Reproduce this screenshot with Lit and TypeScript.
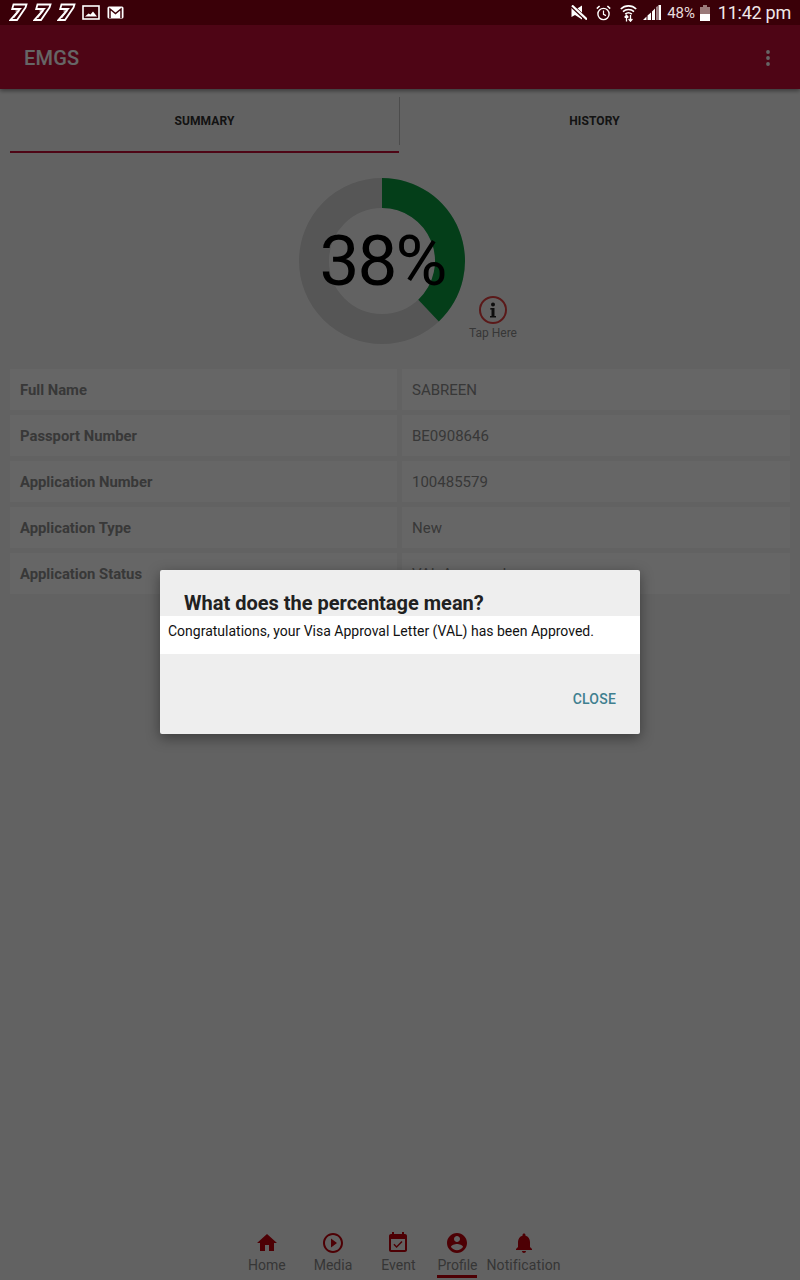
import { LitElement, html, css, svg } from "lit";
import { customElement } from "lit/decorators.js";

const seven = svg`<path d="M4.500 1.500h13l-1 3L8 17H1.500L11 6H3.200z" fill="none" stroke="#fff" stroke-width="1.800"/><path d="M6.500 8h3.500L4.500 15" fill="none" stroke="#fff" stroke-width="1.100"/>`;

const rows: [string, string][] = [
  ["Full Name", "SABREEN"],
  ["Passport Number", "BE0908646"],
  ["Application Number", "100485579"],
  ["Application Type", "New"],
  ["Application Status", "VAL Approved"],
];

const navItems = [
  { label: "Home", cls: "home", d: "M10 20v-6h4v6h5v-8h3L12 3 2 12h3v8z" },
  { label: "Media", cls: "media", d: "M10 16.5l6-4.5-6-4.5v9zM12 2C6.48 2 2 6.48 2 12s4.48 10 10 10 10-4.48 10-10S17.52 2 12 2zm0 18c-4.41 0-8-3.59-8-8s3.59-8 8-8 8 3.59 8 8-3.59 8-8 8z" },
  { label: "Event", cls: "event", d: "M16.53 11.06L15.47 10l-4.88 4.88-2.12-2.12-1.06 1.06L10.59 17l5.94-5.94zM19 3h-1V1h-2v2H8V1H6v2H5c-1.11 0-1.99.9-1.99 2L3 19c0 1.1.89 2 2 2h14c1.1 0 2-.9 2-2V5c0-1.1-.9-2-2-2zm0 16H5V8h14v11z" },
  { label: "Profile", cls: "profile", d: "M12 2C6.48 2 2 6.48 2 12s4.48 10 10 10 10-4.48 10-10S17.52 2 12 2zm0 3c1.66 0 3 1.34 3 3s-1.34 3-3 3-3-1.34-3-3 1.34-3 3-3zm0 14.2c-2.5 0-4.71-1.28-6-3.22.03-1.99 4-3.08 6-3.08 1.99 0 5.97 1.09 6 3.08-1.29 1.94-3.5 3.22-6 3.22z" },
  { label: "Notification", cls: "notif", d: "M12 22c1.1 0 2-.9 2-2h-4c0 1.1.89 2 2 2zm6-6v-5c0-3.07-1.64-5.64-4.5-6.32V4c0-.83-.67-1.5-1.5-1.5s-1.5.67-1.5 1.5v.68C7.63 5.36 6 7.92 6 11v5l-2 2v1h16v-1l-2-2z" },
];

@customElement("app-root")
export class AppRoot extends LitElement {
  static styles = css`
    :host { display: block; position: relative; width: 800px; height: 1280px; overflow: hidden; background: #f6f6f6; font-family: Roboto, "Liberation Sans", sans-serif; }
    .status { height: 25px; background: #3a0008; display: flex; align-items: center; position: relative; z-index: 3; color: #f0e8e8; }
    .left { display: flex; align-items: center; padding-left: 9px; }
    .left svg { display: block; }
    .seven { margin-right: 5px; }
    .seven:nth-child(3) { margin-right: 6px; }
    .pic { margin-right: 7px; }
    .spacer { flex: 1; }
    .right { display: flex; align-items: center; padding-right: 9px; }
    .pct { font-size: 15px; margin-left: 6px; letter-spacing: -.1px; color: #e8dcdc; }
    .time { font-size: 18px; margin-left: 8px; letter-spacing: -.25px; }
    .batt { margin-left: 5px; }
    .m-a { margin-left: 9px; }
    .m-w { margin-left: 9px; }
    .m-s { margin-left: 6px; }
    .appbar { height: 64px; background: #c20d36; display: flex; align-items: center; justify-content: space-between; padding: 2px 30px 0 24px; box-sizing: border-box; color: #fff; font-size: 20px; font-weight: 500; letter-spacing: .2px; box-shadow: 0 2px 4px rgba(0,0,0,.4); position: relative; }
    .tabs { display: flex; margin: 8px 10px 0; height: 56px; }
    .tab { flex: 1; display: flex; align-items: center; justify-content: center; padding-bottom: 9px; font-size: 12px; font-weight: 700; letter-spacing: .1px; color: #303030; }
    .tab.on { border-bottom: 2px solid #c20d36; flex: 0 0 389px; box-sizing: border-box; position: relative; padding-bottom: 7px; }
    .tab.on::after { content: ""; position: absolute; right: -1px; top: 0; height: 48px; width: 1px; background: #bdbdbd; }
    .chart { position: relative; height: 216px; }
    .donut { position: absolute; left: 299px; top: 25px; display: block; }
    .num { position: absolute; left: 299px; top: 24px; width: 167px; height: 167px; display: flex; align-items: center; justify-content: center; font-size: 71px; color: #000; line-height: 1; letter-spacing: -2px; }
    .tap { position: absolute; left: 469px; top: 142px; width: 48px; display: flex; flex-direction: column; align-items: center; color: #8a8a8a; font-size: 12px; }
    .tap svg { display: block; margin-bottom: 1px; }
    .rows { display: flex; flex-direction: column; gap: 5px; padding: 0 10px; }
    .row { display: grid; grid-template-columns: 387px 388px; column-gap: 5px; height: 41px; }
    .cell { background: #ffffff; display: flex; align-items: center; padding: 1px 0 0 10px; font-size: 15px; color: #8c8c8c; }
    .cell.k { font-weight: 700; font-size: 14.8px; color: #8c8c8c; }
    .nav { position: absolute; left: 0; right: 0; top: 1231px; height: 49px; display: flex; padding-left: 248px; }
    .item { display: flex; flex-direction: column; align-items: center; color: #888; font-size: 14px; height: 47px; box-sizing: border-box; }
    .item svg { display: block; flex: none; }
    .item span { line-height: 20px; }
    .media { margin-left: 28px; }
    .event { margin-left: 29px; }
    .profile { margin-left: 22px; border-bottom: 3px solid #c0000a; }
    .notif { margin-left: 9px; letter-spacing: .1px; }
    .scrim { position: absolute; left: 0; right: 0; top: 25px; bottom: 0; background: rgba(0,0,0,.6); }
    .dialog { position: absolute; left: 160px; top: 570px; width: 480px; height: 164px; background: #eeeeee; border-radius: 2px; box-shadow: 0 4px 14px rgba(0,0,0,.4); display: flex; flex-direction: column; overflow: hidden; }
    .title { height: 46px; box-sizing: border-box; padding: 20px 24px 0; font-size: 20px; font-weight: 700; line-height: 27px; color: #212121; white-space: nowrap; }
    .body { height: 38px; box-sizing: border-box; background: #fff; padding: 5px 8px 0; font-size: 14px; line-height: 20px; color: #111; }
    .actions { flex: 1; display: flex; justify-content: flex-end; align-items: center; padding: 10px 24px 0 0; font-size: 14px; font-weight: 500; color: #3f7f8f; letter-spacing: .2px; }
  `;

  render() {
    const sweep = (38 / 100) * 2 * Math.PI;
    const R = 83, r = 53, c = 83;
    const pt = (rad: number, a: number) => `${(c + rad * Math.sin(a)).toFixed(2)} ${(c - rad * Math.cos(a)).toFixed(2)}`;
    const arc = `M${pt(R, 0)} A${R} ${R} 0 0 1 ${pt(R, sweep)} L${pt(r, sweep)} A${r} ${r} 0 0 0 ${pt(r, 0)} Z`;
    return html`
      <div class="status">
        <div class="left">
          ${[0, 1, 2].map(() => html`<svg class="seven" width="19" height="19" viewBox="0 0 19 19">${seven}</svg>`)}
          <svg class="pic" width="18" height="15" viewBox="0 0 18 15"><rect x="1" y="1" width="16" height="13" fill="none" stroke="#fff" stroke-width="1.600"/><path d="M3 11.500l3.500-3 2 1 2.500-3 4 5z" fill="#fff"/></svg>
          <svg width="17" height="13" viewBox="0 0 17 13"><rect x="0.500" y="0.500" width="16" height="12" rx="1.500" fill="#fff"/><path d="M3 12V3l5.500 4.500L14 3v9" fill="none" stroke="#3a0008" stroke-width="1.500"/></svg>
        </div>
        <div class="spacer"></div>
        <div class="right">
          <svg width="16" height="15" viewBox="0 0 16 15"><path d="M0.500 2l3.500 3 7-4.500v14L4 10 0.500 12z" fill="#fff"/><path d="M0 0l15 14" stroke="#3a0008" stroke-width="4"/><path d="M1 0.500l15 14" stroke="#fff" stroke-width="2.200"/></svg>
          <svg class="m-a" width="15" height="16" viewBox="0 0 15 16"><circle cx="7.500" cy="9" r="5.600" fill="none" stroke="#fff" stroke-width="1.400"/><path d="M7.500 5.500V9.400l2.500 1.200" fill="none" stroke="#fff" stroke-width="1.200"/><path d="M.8 3.600L3.600 1M14.200 3.600L11.400 1" stroke="#fff" stroke-width="1.500"/></svg>
          <svg class="m-w" width="17" height="18" viewBox="0 0 17 18"><path d="M.8 5a11 11 0 0 1 15.400 0M3 7.700a8 8 0 0 1 11 0M5.200 10.200a5 5 0 0 1 6.600 0" fill="none" stroke="#fff" stroke-width="1.600"/><path d="M6.500 17.500v-6M4.600 13.500l1.900-2.200 1.900 2.200M10.500 11v6M8.600 15l1.900 2.200 1.900-2.200" fill="none" stroke="#fff" stroke-width="1.300"/></svg>
          <svg class="m-s" width="18" height="15" viewBox="0 0 18 15"><path d="M0 15l3.500-3.500V15zM4.500 15v-4.500L8 7.500V15zM9 15V6.500L12 3.500V15zM13.500 15V2L14.500 1V15zM15.500 15V0L18 0V15z" fill="#fff"/></svg>
          <span class="pct">48%</span>
          <svg class="batt" width="10" height="16" viewBox="0 0 10 16"><rect x="3" y="0" width="4" height="2" fill="#9a7a7a"/><rect x="0" y="2" width="10" height="14" fill="#9a7a7a"/><rect x="0" y="9" width="10" height="7" fill="#fff"/></svg>
          <span class="time">11:42 pm</span>
        </div>
      </div>
      <div class="appbar">
        <span>EMGS</span>
        <svg width="4" height="16" viewBox="0 0 4 16"><circle cx="2" cy="2" r="1.900" fill="#fff"/><circle cx="2" cy="8" r="1.900" fill="#fff"/><circle cx="2" cy="14" r="1.900" fill="#fff"/></svg>
      </div>
      <div class="tabs">
        <div class="tab on">SUMMARY</div>
        <div class="tab">HISTORY</div>
      </div>
      <div class="chart">
        <svg class="donut" width="166" height="166" viewBox="0 0 166 166">
          <circle cx="83" cy="83" r="68" fill="none" stroke="#d6d6d6" stroke-width="30"/>
          <path d="${arc}" fill="#0a9c40"/>
        </svg>
        <div class="num">38%</div>
        <div class="tap">
          <svg width="30" height="30" viewBox="0 0 30 30"><circle cx="15" cy="15" r="13" fill="none" stroke="#e04040" stroke-width="2"/><path d="M13 9.500a2 2 0 1 1 4 0a2 2 0 1 1-4 0zM12.500 13h4v8h1.500v1.500h-6V21h1.500v-6.500h-1.500z" fill="#222"/></svg>
          <span>Tap Here</span>
        </div>
      </div>
      <div class="rows">
        ${rows.map(([k, v]) => html`<div class="row"><div class="cell k">${k}</div><div class="cell">${v}</div></div>`)}
      </div>
      <div class="nav">
        ${navItems.map((n) => html`<div class="item ${n.cls}">
          <svg width="24" height="24" viewBox="0 0 24 24"><path d="${n.d}" fill="#c0000a"/></svg>
          <span>${n.label}</span>
        </div>`)}
      </div>
      <div class="scrim"></div>
      <div class="dialog">
        <div class="title">What does the percentage mean?</div>
        <div class="body">Congratulations, your Visa Approval Letter (VAL) has been Approved.</div>
        <div class="actions">CLOSE</div>
      </div>
    `;
  }
}
